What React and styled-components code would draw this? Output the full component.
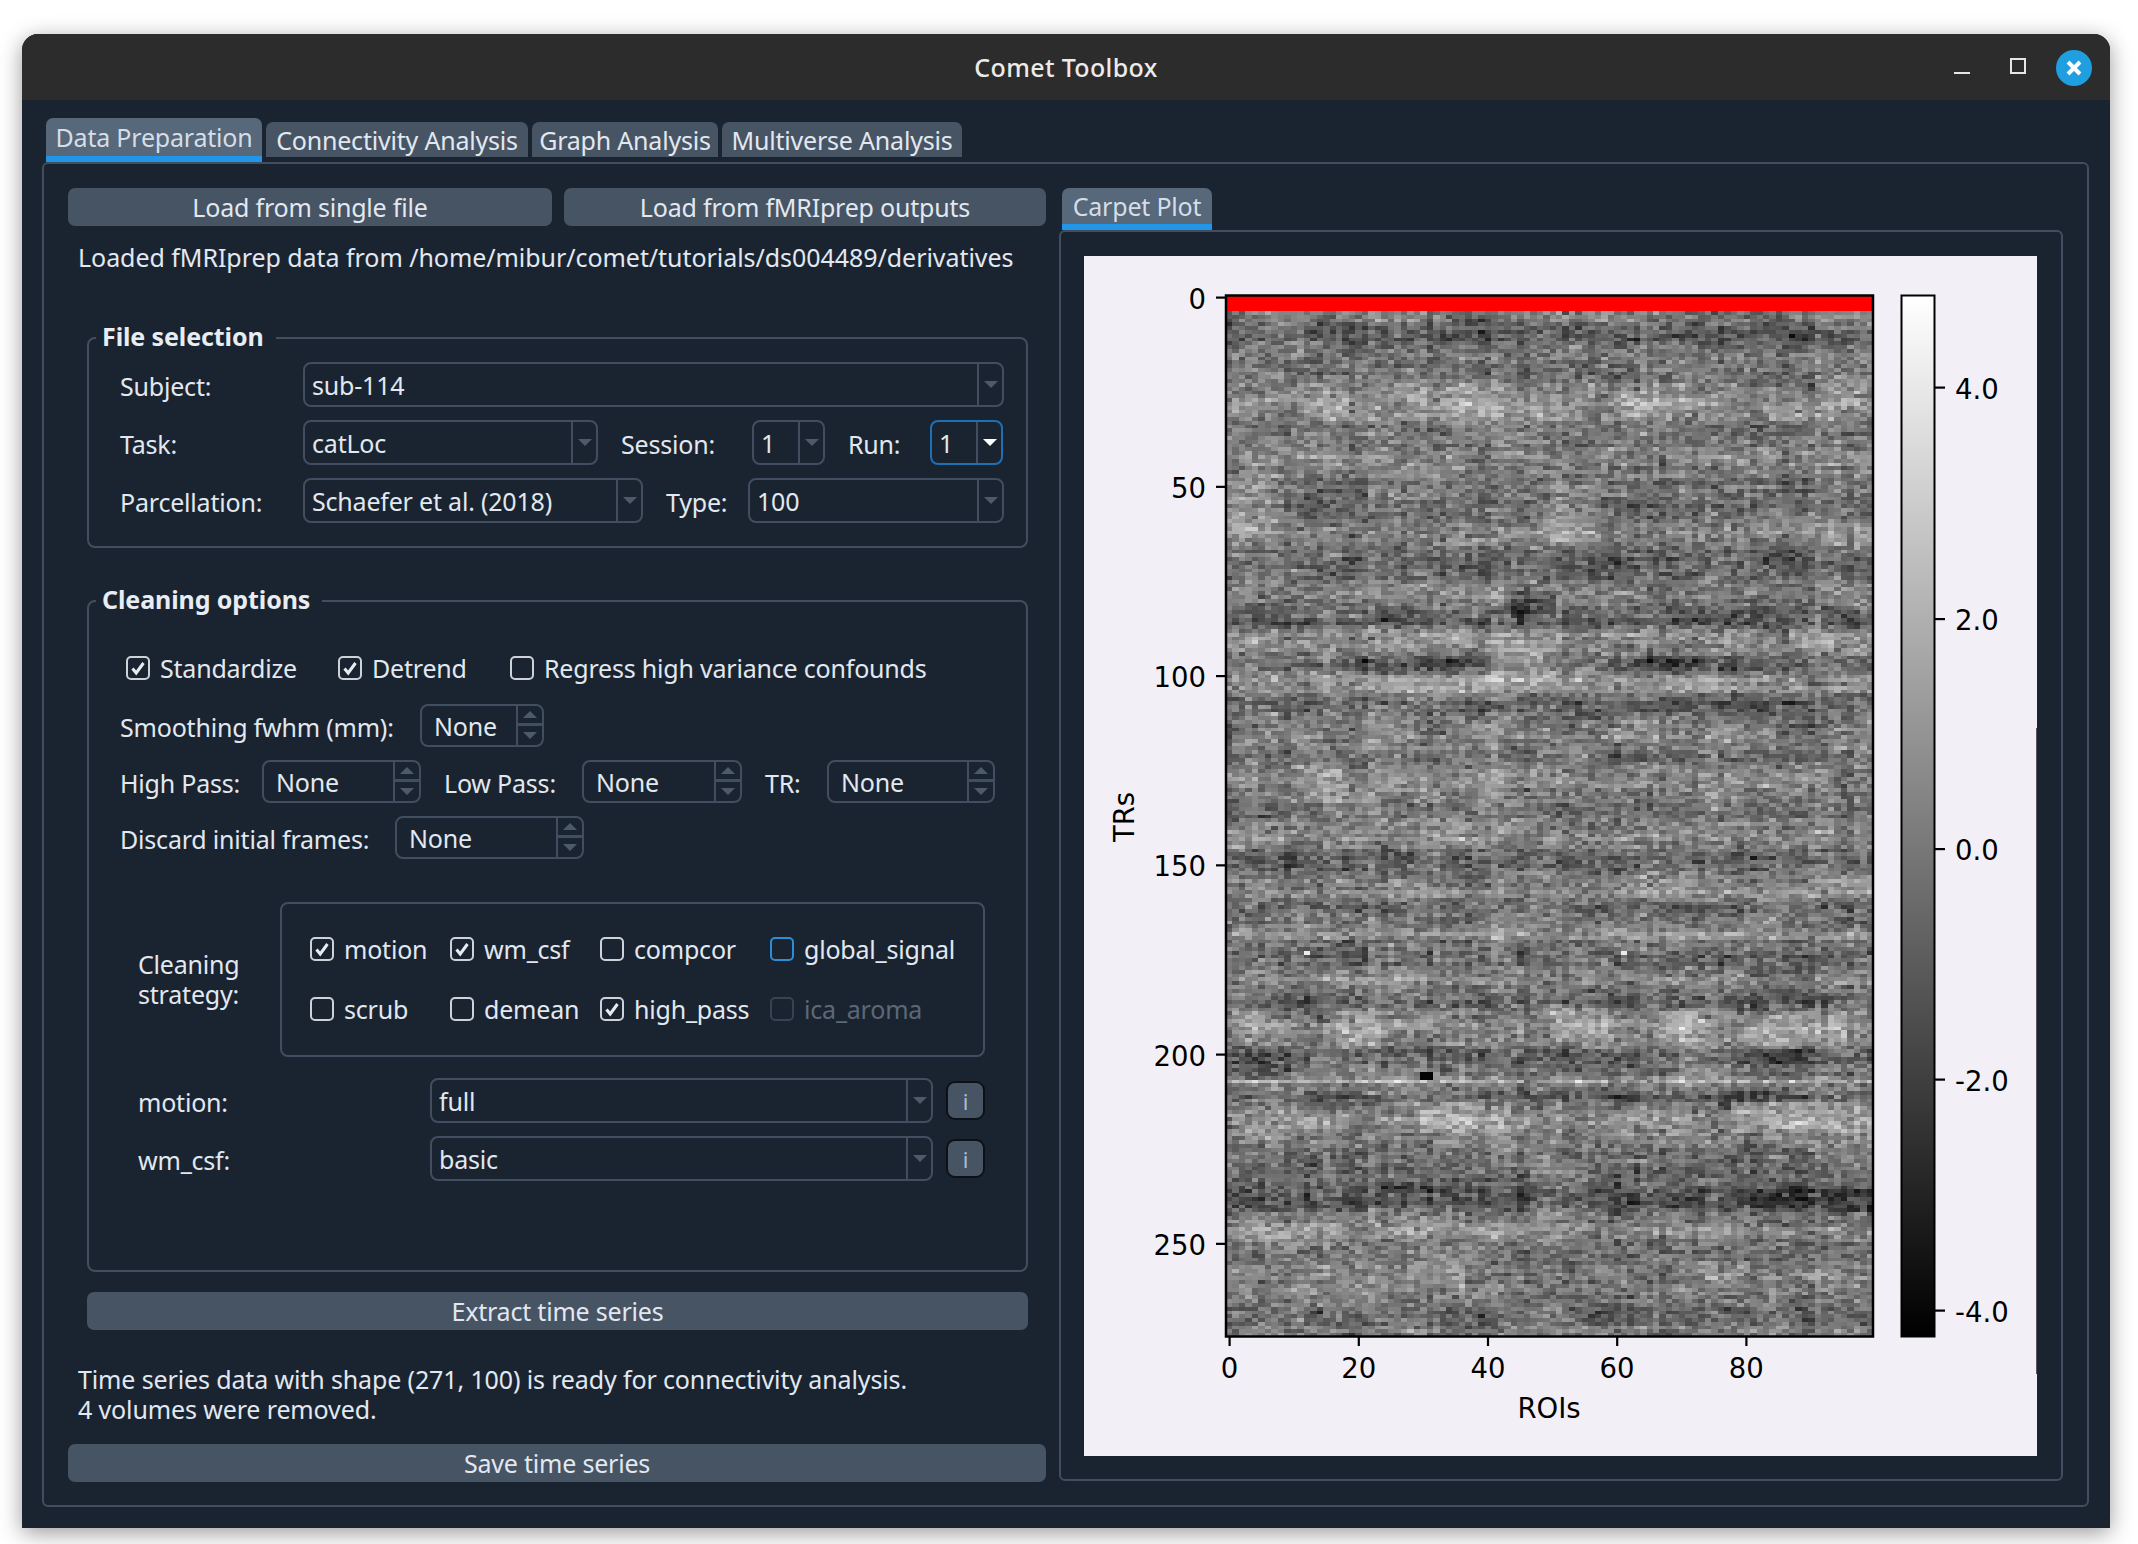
import React from "react";
import styled, { createGlobalStyle } from "styled-components";

const UI_FONT = `"Noto Sans", "Open Sans", sans-serif`;
const TEXT = "#e2e8f0";
const BG = "#1a2430";
const LINE = "#414e60";
const BTN = "#475464";

const GlobalStyle = createGlobalStyle`
  html, body { margin: 0; background: #fff; }
  body { font-family: ${UI_FONT}; font-size: 25px; letter-spacing: -0.2px; color: ${TEXT}; }
  * { box-sizing: border-box; }
`;

const Page = styled.div`
  width: 2138px;
  height: 1544px;
  padding: 34px 28px 16px 22px;
`;

const Window = styled.div`
  width: 2088px;
  height: 1494px;
  display: flex;
  flex-direction: column;
  background: ${BG};
  border-radius: 16px 16px 0 0;
  box-shadow: 0 5px 22px rgba(0, 0, 0, 0.4);
`;

const TitleBar = styled.div`
  height: 66px;
  flex: none;
  position: relative;
  display: flex;
  align-items: center;
  justify-content: center;
  background: #2c2c2c;
  border-radius: 16px 16px 0 0;
`;

const Title = styled.div`
  font-weight: 500;
  letter-spacing: 0.35px;
  color: #ebebeb;
`;

const WinControls = styled.div`
  position: absolute;
  right: 18px;
  top: 16px;
  display: flex;
  align-items: center;
  height: 36px;
`;

const MinIcon = styled.div`
  width: 16px;
  height: 2px;
  margin-top: 9px;
  background: #e6e6e6;
`;

const MaxIcon = styled.div`
  width: 16px;
  height: 16px;
  margin: -4px 30px 0 40px;
  border: 2px solid #e6e6e6;
`;

const CloseButton = styled.div`
  width: 36px;
  height: 36px;
  border-radius: 50%;
  background: #1f9fe0;
  display: flex;
  align-items: center;
  justify-content: center;
`;

const Body = styled.div`
  flex: 1;
  display: flex;
  flex-direction: column;
  padding: 18px 21px 21px 20px;
`;

const TabBar = styled.div`
  height: 44px;
  flex: none;
  display: flex;
  gap: 4px;
  padding-left: 4px;
`;

const Tab = styled.div`
  height: ${(p) => (p.$active ? "44px" : "35px")};
  margin-top: ${(p) => (p.$active ? "0" : "4px")};
  width: ${(p) => p.$w}px;
  display: flex;
  align-items: center;
  justify-content: center;
  white-space: nowrap;
  background: ${(p) => (p.$active ? "#566879" : BTN)};
  border-bottom: ${(p) => (p.$active ? "6px solid #2196e8" : "none")};
  border-radius: 7px 7px 0 0;
  color: ${(p) => (p.$active ? "#d5dee8" : TEXT)};
`;

const Pane = styled.div`
  flex: 1;
  display: grid;
  grid-template-columns: 978px 1004px;
  gap: 13px;
  align-items: start;
  padding: 24px 24px 23px;
  border: 2px solid ${LINE};
  border-radius: 6px;
`;

const LeftColumn = styled.div`
  display: flex;
  flex-direction: column;
`;

const ButtonRow = styled.div`
  display: grid;
  grid-template-columns: 484px 1fr;
  gap: 12px;
`;

const PushButton = styled.div`
  height: 38px;
  margin: ${(p) => p.$margin || "0"};
  padding-bottom: 1px;
  display: flex;
  align-items: center;
  justify-content: center;
  background: ${BTN};
  border-radius: 7px;
`;

const Status = styled.div`
  margin: ${(p) => p.$margin};
  padding-left: 10px;
  line-height: 30px;
  white-space: nowrap;
  letter-spacing: ${(p) => p.$spacing || "-0.2px"};
`;

const Group = styled.fieldset`
  min-width: 0;
  margin: ${(p) => p.$margin};
  padding: ${(p) => p.$padding};
  height: ${(p) => p.$h}px;
  border: 2px solid ${LINE};
  border-radius: 8px;
`;

const GroupTitle = styled.legend`
  margin-left: -24px;
  padding: 0 12px 0 6px;
  height: 30px;
  line-height: 26px;
  font-weight: 700;
  letter-spacing: -0.1px;
  color: #e8edf3;
`;

const FieldRow = styled.div`
  display: flex;
  align-items: center;
  margin-top: ${(p) => p.$top || 0}px;
  padding-left: ${(p) => p.$indent || 0}px;
`;

const FieldLabel = styled.div`
  width: ${(p) => p.$w}px;
  margin-left: ${(p) => p.$ml || 0}px;
  padding-top: 2px;
  flex: none;
  white-space: nowrap;
`;

const Combo = styled.div`
  height: 45px;
  width: ${(p) => (p.$w ? `${p.$w}px` : "auto")};
  flex: ${(p) => (p.$w ? "none" : 1)};
  display: flex;
  border: 2px solid ${(p) => (p.$focus ? "#1f6fb5" : LINE)};
  border-radius: 8px;
`;

const ComboText = styled.div`
  flex: 1;
  padding-left: 7px;
  line-height: 42px;
`;

const DropButton = styled.div`
  width: 25px;
  flex: none;
  display: flex;
  align-items: center;
  justify-content: center;
  border-left: 2px solid ${LINE};
`;

const Arrow = styled.div`
  width: 0;
  height: 0;
  border-left: 7px solid transparent;
  border-right: 7px solid transparent;
  ${(p) => (p.$up ? "border-bottom" : "border-top")}: 7px solid ${(p) => (p.$bright ? "#fff" : "#4d5a6b")};
`;

const Spin = styled.div`
  height: 43px;
  width: ${(p) => p.$w}px;
  flex: none;
  display: flex;
  border: 2px solid ${LINE};
  border-radius: 8px;
`;

const SpinText = styled.div`
  flex: 1;
  padding-left: 12px;
  line-height: 40px;
`;

const SpinButtons = styled.div`
  width: 26px;
  flex: none;
  display: grid;
  grid-template-rows: 1fr 1fr;
  border-left: 2px solid ${LINE};
`;

const SpinHalf = styled.div`
  display: flex;
  align-items: center;
  justify-content: center;
  border-bottom: ${(p) => (p.$first ? `3px solid ${LINE}` : "none")};
`;

const CheckRow = styled.div`
  display: flex;
  padding-left: 6px;
  margin-top: 40px;
`;

const CheckItem = styled.div`
  display: flex;
  align-items: center;
  gap: 10px;
  width: ${(p) => (p.$w ? `${p.$w}px` : "auto")};
  height: 24px;
  white-space: nowrap;
  color: ${(p) => (p.$disabled ? "#5c6878" : TEXT)};
`;

const Box = styled.div`
  width: 24px;
  height: 24px;
  flex: none;
  display: flex;
  align-items: center;
  justify-content: center;
  border: 2px solid ${(p) => (p.$focus ? "#2b8fd8" : p.$disabled ? "#374352" : "#cdd2d8")};
  border-radius: 5px;
`;

const StrategyRow = styled.div`
  display: flex;
  align-items: center;
  margin-top: 43px;
  padding-left: 18px;
`;

const StrategyLabel = styled.div`
  width: 142px;
  padding-bottom: 2px;
  flex: none;
  line-height: 30px;
`;

const StrategyBox = styled.div`
  width: 705px;
  height: 155px;
  display: grid;
  grid-template-columns: 140px 150px 170px auto;
  row-gap: 36px;
  align-content: start;
  padding: 33px 0 0 28px;
  border: 2px solid ${LINE};
  border-radius: 8px;
`;

const InfoButton = styled.div`
  width: 39px;
  height: 39px;
  margin-left: 13px;
  display: flex;
  align-items: center;
  justify-content: center;
  background: ${BTN};
  border: 2px solid #0d1117;
  border-radius: 9px;
  color: #a9bed3;
  font-size: 22px;
`;

const RightColumn = styled.div`
  display: flex;
  flex-direction: column;
`;

const PlotTabBar = styled.div`
  height: 42px;
  padding-left: 3px;
`;

const PlotTab = styled.div`
  width: 150px;
  height: 42px;
  display: flex;
  align-items: center;
  justify-content: center;
  background: #566879;
  border-bottom: 6px solid #2196e8;
  border-radius: 7px 7px 0 0;
  color: #d5dee8;
`;

const PlotPane = styled.div`
  padding: 24px 24px 23px 23px;
  border: 2px solid ${LINE};
  border-radius: 6px;
`;

const PlotSvg = styled.svg`
  display: block;
  width: 953px;
  height: 1200px;
  background: #f2f0f6;
`;

const AxisText = styled.text`
  font-family: "DejaVu Sans", sans-serif;
  font-size: 27.5px;
  letter-spacing: 0;
  fill: #000;
`;

// piecewise brightness per TR, read off the carpet by eye
const BANDS = [
  [4, 5], [9, -22], [11, -25], [15, 10], [20, -10], [27, 22], [31, 15], [35, -14], [42, 14], [49, -5],
  [56, -14], [62, 14], [67, -10], [71, -28], [75, 0], [79, 8], [83, -20], [86, -32], [89, 28], [93, 8],
  [97, -24], [101, 33], [104, 15], [107, -24], [113, 5], [117, 14], [121, -8], [125, 5], [130, 18], [135, -14],
  [140, 5], [143, 14], [148, -24], [152, -10], [157, 18], [161, -24], [165, -5], [168, 28], [170, -5], [174, -24],
  [180, 14], [186, -24], [192, 24], [196, 10], [200, -24], [204, -14], [206, 8], [207, 50], [208, 5], [211, -24],
  [217, 24], [221, 14], [226, -14], [232, -14], [237, -33], [240, -28], [246, 28], [248, 15], [252, -3], [257, 10],
  [262, 8], [268, -14], [272, 0], [275, 0],
];

// local blotches: [col from, col to, row from, row to, offset]
const PATCHES = [
  [50, 57, 48, 64, 24], [0, 6, 48, 62, 22], [44, 50, 78, 84, -22], [40, 50, 90, 103, 20],
  [20, 36, 95, 99, -28], [65, 78, 95, 99, -28], [60, 68, 25, 31, 18], [29, 48, 28, 34, 12],
  [17, 23, 188, 198, 20], [50, 58, 188, 198, 22], [67, 73, 188, 198, 24], [80, 95, 189, 198, 22],
  [30, 46, 213, 220, 20], [78, 98, 213, 220, 24], [2, 12, 200, 206, -20], [80, 90, 198, 202, -26],
  [82, 100, 236, 241, -22], [44, 50, 78, 83, -18], [0, 10, 113, 130, -4],
];

const rng = (seed) => () => {
  seed = (seed + 0x6d2b79f5) | 0;
  let t = Math.imul(seed ^ (seed >>> 15), 1 | seed);
  t = (t + Math.imul(t ^ (t >>> 7), 61 | t)) ^ t;
  return ((t ^ (t >>> 14)) >>> 0) / 4294967296;
};

const bandAt = (row) => {
  for (let i = 1; i < BANDS.length; i++) {
    const [r1, v1] = BANDS[i];
    const [r0, v0] = BANDS[i - 1];
    if (row <= r1) return v0 + ((v1 - v0) * (row - r0)) / (r1 - r0);
  }
  return 0;
};

const patchAt = (c, r) => {
  let sum = 0;
  for (const [c0, c1, r0, r1, v] of PATCHES) {
    if (c >= c0 && c <= c1 && r >= r0 && r <= r1) sum += v;
  }
  return sum;
};

const buildCarpet = () => {
  const rand = rng(4489);
  const cols = 100;
  const rows = 275;
  const coarse = [];
  for (let y = 0; y < 50; y++) {
    coarse.push(Array.from({ length: 24 }, () => rand() - 0.5));
  }
  const smooth = (c, r) => {
    const fx = c / 5;
    const fy = r / 6;
    const x = Math.floor(fx);
    const y = Math.floor(fy);
    const a = fx - x;
    const b = fy - y;
    return (
      coarse[y][x] * (1 - a) * (1 - b) +
      coarse[y][x + 1] * a * (1 - b) +
      coarse[y + 1][x] * (1 - a) * b +
      coarse[y + 1][x + 1] * a * b
    );
  };
  const colBias = Array.from({ length: cols }, () => (rand() - 0.5) * 22);
  const colGain = Array.from({ length: cols }, () => 0.55 + rand() * 0.9);
  const paths = new Map();
  for (let r = 4; r < rows; r++) {
    const rowJitter = (rand() - 0.5) * 16;
    let run = 0;
    for (let c = 0; c < cols; c++) {
      // horizontally correlated noise gives the short dashes seen in the carpet
      run = run * 0.45 + (rand() - 0.5) * 36;
      const n = rand() + rand() - 1;
      let g =
        122 +
        bandAt(r) * colGain[c] +
        patchAt(c, r) +
        rowJitter +
        smooth(c, r) * 36 +
        colBias[c] +
        run +
        n * 44;
      if (r === 173 && (c === 12 || c === 61)) g = 235;
      if ((r === 205 || r === 206) && (c === 30 || c === 31)) g = 5;
      g = Math.max(4, Math.min(250, Math.round(g / 4) * 4));
      const x0 = Math.round((c * 647) / cols);
      const x1 = Math.round(((c + 1) * 647) / cols);
      const y0 = Math.round((r * 1041) / rows);
      const y1 = Math.round(((r + 1) * 1041) / rows);
      const cell = `M${x0} ${y0}H${x1}V${y1}H${x0}Z`;
      paths.set(g, (paths.get(g) || "") + cell);
    }
  }
  return [...paths.entries()];
};

const carpet = buildCarpet();

const yTicks = [0, 50, 100, 150, 200, 250];
const xTicks = [0, 20, 40, 60, 80];
const barTicks = [
  ["4.0", 131.5],
  ["2.0", 363],
  ["0.0", 593],
  ["-2.0", 823.5],
  ["-4.0", 1054.5],
];

const CarpetPlot = () => (
  <PlotSvg viewBox="0 0 953 1200">
    <defs>
      <linearGradient id="grayBar" x1="0" y1="0" x2="0" y2="1">
        <stop offset="0" stopColor="#ffffff" />
        <stop offset="1" stopColor="#000000" />
      </linearGradient>
    </defs>
    <g transform="translate(142 39.5)" shapeRendering="crispEdges">
      {carpet.map(([g, d]) => (
        <path key={g} d={d} fill={`rgb(${g},${g},${g})`} />
      ))}
      <rect x="0" y="0" width="647" height="15" fill="#ff0000" />
    </g>
    <rect x="142" y="39.5" width="647" height="1041" fill="none" stroke="#000" strokeWidth="2.5" />
    {yTicks.map((t) => {
      const y = 41.5 + t * 3.785;
      return (
        <g key={t}>
          <rect x="132" y={y - 1} width="10" height="2.2" fill="#000" />
          <AxisText x="122" y={y + 11} textAnchor="end">
            {t}
          </AxisText>
        </g>
      );
    })}
    {xTicks.map((t) => {
      const x = 145.5 + t * 6.46;
      return (
        <g key={t}>
          <rect x={x - 1} y="1080" width="2.2" height="10" fill="#000" />
          <AxisText x={x} y="1122" textAnchor="middle">
            {t}
          </AxisText>
        </g>
      );
    })}
    <AxisText x="465" y="1162" textAnchor="middle">
      ROIs
    </AxisText>
    <AxisText transform="translate(50 561) rotate(-90)" textAnchor="middle">
      TRs
    </AxisText>
    <rect x="817.5" y="39.5" width="33" height="1041" fill="url(#grayBar)" stroke="#000" strokeWidth="2" />
    {barTicks.map(([label, y]) => (
      <g key={label}>
        <rect x="851" y={y - 1} width="10" height="2.2" fill="#000" />
        <AxisText x="871" y={y + 11}>
          {label}
        </AxisText>
      </g>
    ))}
    <rect x="952" y="472" width="1" height="646" fill="#55585e" />
  </PlotSvg>
);

const Combobox = ({ value, w, focus }) => (
  <Combo $w={w} $focus={focus}>
    <ComboText>{value}</ComboText>
    <DropButton>
      <Arrow $bright={focus} />
    </DropButton>
  </Combo>
);

const SpinBox = ({ w }) => (
  <Spin $w={w}>
    <SpinText>None</SpinText>
    <SpinButtons>
      <SpinHalf $first>
        <Arrow $up />
      </SpinHalf>
      <SpinHalf>
        <Arrow />
      </SpinHalf>
    </SpinButtons>
  </Spin>
);

const Check = ({ label, checked, focus, disabled, w }) => (
  <CheckItem $w={w} $disabled={disabled}>
    <Box $focus={focus} $disabled={disabled}>
      {checked && (
        <svg width="16" height="16" viewBox="0 0 16 16">
          <path d="M2.5 8.5 L6.2 13 L13.5 3" fill="none" stroke="#e8ecf0" strokeWidth="3" />
        </svg>
      )}
    </Box>
    {label}
  </CheckItem>
);

const App = () => (
  <Page>
    <GlobalStyle />
    <Window>
      <TitleBar>
        <Title>Comet Toolbox</Title>
        <WinControls>
          <MinIcon />
          <MaxIcon />
          <CloseButton>
            <svg width="18" height="18" viewBox="0 0 18 18">
              <path d="M3 3 L15 15 M15 3 L3 15" stroke="#fff" strokeWidth="4" />
            </svg>
          </CloseButton>
        </WinControls>
      </TitleBar>
      <Body>
        <TabBar>
          <Tab $active $w={216}>Data Preparation</Tab>
          <Tab $w={262}>Connectivity Analysis</Tab>
          <Tab $w={186}>Graph Analysis</Tab>
          <Tab $w={240}>Multiverse Analysis</Tab>
        </TabBar>
        <Pane>
          <LeftColumn>
            <ButtonRow>
              <PushButton>Load from single file</PushButton>
              <PushButton>Load from fMRIprep outputs</PushButton>
            </ButtonRow>
            <Status $margin="16px 0 0" $spacing="-0.05px">
              Loaded fMRIprep data from /home/mibur/comet/tutorials/ds004489/derivatives
            </Status>
            <Group $margin="51px 18px 0 19px" $padding="9px 22px 0 31px" $h={225}>
              <GroupTitle>File selection</GroupTitle>
              <FieldRow>
                <FieldLabel $w={183}>Subject:</FieldLabel>
                <Combobox value="sub-114" />
              </FieldRow>
              <FieldRow $top={13}>
                <FieldLabel $w={183}>Task:</FieldLabel>
                <Combobox value="catLoc" w={295} />
                <FieldLabel $w={131} $ml={23}>Session:</FieldLabel>
                <Combobox value="1" w={73} />
                <FieldLabel $w={82} $ml={23}>Run:</FieldLabel>
                <Combobox value="1" w={73} focus />
              </FieldRow>
              <FieldRow $top={13}>
                <FieldLabel $w={183}>Parcellation:</FieldLabel>
                <Combobox value="Schaefer et al. (2018)" w={340} />
                <FieldLabel $w={82} $ml={23}>Type:</FieldLabel>
                <Combobox value="100" />
              </FieldRow>
            </Group>
            <Group $margin="38px 18px 0 19px" $padding="0 22px 0 31px" $h={686}>
              <GroupTitle>Cleaning options</GroupTitle>
              <CheckRow>
                <Check label="Standardize" checked w={212} />
                <Check label="Detrend" checked w={172} />
                <Check label="Regress high variance confounds" />
              </CheckRow>
              <FieldRow $top={24}>
                <FieldLabel $w={300}>Smoothing fwhm (mm):</FieldLabel>
                <SpinBox w={124} />
              </FieldRow>
              <FieldRow $top={13}>
                <FieldLabel $w={142}>High Pass:</FieldLabel>
                <SpinBox w={159} />
                <FieldLabel $w={138} $ml={23}>Low Pass:</FieldLabel>
                <SpinBox w={160} />
                <FieldLabel $w={62} $ml={23}>TR:</FieldLabel>
                <SpinBox w={168} />
              </FieldRow>
              <FieldRow $top={13}>
                <FieldLabel $w={275}>Discard initial frames:</FieldLabel>
                <SpinBox w={189} />
              </FieldRow>
              <StrategyRow>
                <StrategyLabel>
                  Cleaning
                  <br />
                  strategy:
                </StrategyLabel>
                <StrategyBox>
                  <Check label="motion" checked />
                  <Check label="wm_csf" checked />
                  <Check label="compcor" />
                  <Check label="global_signal" focus />
                  <Check label="scrub" />
                  <Check label="demean" />
                  <Check label="high_pass" checked />
                  <Check label="ica_aroma" disabled />
                </StrategyBox>
              </StrategyRow>
              <FieldRow $top={21} $indent={18}>
                <FieldLabel $w={292}>motion:</FieldLabel>
                <Combobox value="full" w={503} />
                <InfoButton>i</InfoButton>
              </FieldRow>
              <FieldRow $top={13} $indent={18}>
                <FieldLabel $w={292}>wm_csf:</FieldLabel>
                <Combobox value="basic" w={503} />
                <InfoButton>i</InfoButton>
              </FieldRow>
            </Group>
            <PushButton $margin="20px 18px 0 19px">Extract time series</PushButton>
            <Status $margin="34px 0 0" $spacing="-0.13px">
              Time series data with shape (271, 100) is ready for connectivity analysis.
              <br />
              4 volumes were removed.
            </Status>
            <PushButton $margin="20px 0 0">Save time series</PushButton>
          </LeftColumn>
          <RightColumn>
            <PlotTabBar>
              <PlotTab>Carpet Plot</PlotTab>
            </PlotTabBar>
            <PlotPane>
              <CarpetPlot />
            </PlotPane>
          </RightColumn>
        </Pane>
      </Body>
    </Window>
  </Page>
);

export default App;
